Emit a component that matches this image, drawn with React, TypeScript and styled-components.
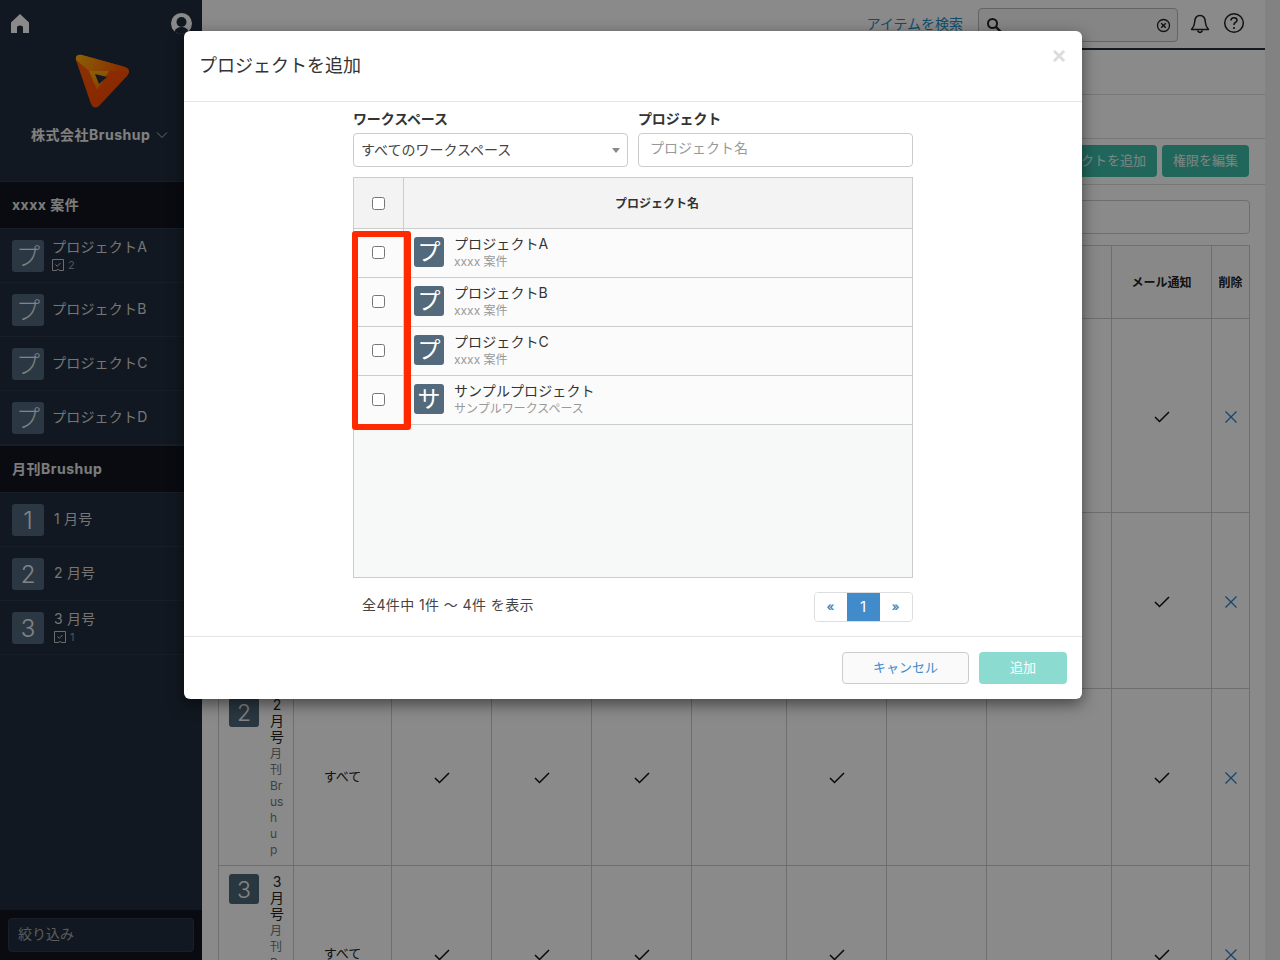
import React from "react";
import styled, { createGlobalStyle } from "styled-components";

const FONT = `Inter, "Noto Sans CJK JP", "Noto Sans", sans-serif`;

const Global = createGlobalStyle`
  html, body { margin: 0; padding: 0; height: 960px; overflow: hidden; background: #fff; }
  #root { height: 960px; }
  * { box-sizing: border-box; }
  body { font-family: ${FONT}; font-size: 13px; color: #333; }
`;

const Page = styled.div`
  display: flex;
  height: 960px;
  overflow: hidden;
  position: relative;
`;

/* ---------- sidebar ---------- */
const Sidebar = styled.aside`
  width: 202px;
  flex: none;
  height: 960px;
  background: #222e3d;
  display: flex;
  flex-direction: column;
  color: #fff;
`;
const SideTop = styled.div`
  height: 181px;
  flex: none;
  padding: 14px 10px 0 11px;
  display: flex;
  flex-direction: column;
`;
const SideIcons = styled.div`
  display: flex;
  justify-content: space-between;
  height: 24px;
`;
const UserSlot = styled.div`
  margin-top: -1px;
`;
const LogoWrap = styled.div`
  display: flex;
  padding-left: 64px;
  margin-top: 16px;
`;
const Company = styled.div`
  margin-top: 17px;
  padding-left: 20px;
  font-size: 14px;
  font-weight: 700;
  letter-spacing: 0.5px;
  line-height: 20px;
  color: #eee;
  display: flex;
  align-items: center;
  gap: 6px;
`;
const SectionHead = styled.div`
  height: 48px;
  flex: none;
  background: #11161e;
  border-top: 1px solid #2b3848;
  border-bottom: 1px solid #2b3848;
  padding: 0 12px 2px;
  display: flex;
  align-items: center;
  font-size: 14px;
  font-weight: 700;
  letter-spacing: 0.5px;
  color: #e6e6e6;
`;
const SideRow = styled.div`
  height: 54px;
  flex: none;
  border-bottom: 1px solid #2b3848;
  padding: 0 12px;
  display: flex;
  align-items: center;
  gap: 8px;
`;
const SideAvatar = styled.div`
  width: 32px;
  height: 32px;
  flex: none;
  border-radius: 3px;
  background: #50687e;
  color: #f2f2f2;
  font-size: 24px;
  font-weight: 300;
  line-height: 34px;
  text-align: center;
`;
const SideText = styled.div<{ $num: boolean }>`
  display: flex;
  flex-direction: column;
  font-size: 14px;
  line-height: 18px;
  color: #d9d9d9;
  letter-spacing: 0.2px;
  margin-top: -1px;
  padding-left: ${(p) => (p.$num ? 2 : 0)}px;
`;
const Badge = styled.span`
  display: flex;
  align-items: center;
  gap: 4px;
  margin-top: 1px;
  font-size: 11px;
  line-height: 16px;
  color: #999;
`;
const SideSpacer = styled.div`
  flex: 1;
`;
const SideFilterBar = styled.div`
  height: 50px;
  flex: none;
  background: #11161e;
  padding: 8px 8px 0;
`;
const SideFilter = styled.div`
  height: 34px;
  width: 186px;
  border: 1px solid #2f3c4c;
  border-radius: 4px;
  background: #222e3d;
  color: #a8a8a8;
  font-size: 14px;
  line-height: 30px;
  padding: 0 9px;
`;

/* ---------- main behind modal ---------- */
const Main = styled.main`
  width: 1063px;
  flex: none;
  height: 960px;
  background: #fff;
  display: flex;
  flex-direction: column;
`;
const ScrollTrack = styled.div`
  width: 15px;
  flex: none;
  height: 960px;
  background: #f0f0f0;
`;
const TopBar = styled.header`
  height: 50px;
  flex: none;
  border-bottom: 2px solid #26303c;
  display: flex;
  align-items: flex-start;
  justify-content: flex-end;
  padding: 8px 20px 0 0;
`;
const SearchLink = styled.span`
  font-size: 14px;
  line-height: 32px;
  color: #1a8fc9;
  margin-right: 15px;
`;
const SearchBox = styled.div`
  width: 200px;
  height: 34px;
  border: 1px solid #bbb;
  border-radius: 4px;
  background: #f6f6f6;
  display: flex;
  align-items: center;
  justify-content: space-between;
  padding: 0 6px 0 7px;
  margin-right: 12px;
`;
const TopIcons = styled.div`
  display: flex;
  gap: 13px;
  padding-top: 4px;
`;
const BellSlot = styled.div`
  margin-top: 2px;
`;
const SubBand = styled.div<{ $h: number }>`
  height: ${(p) => p.$h}px;
  flex: none;
  border-bottom: 1px solid #ddd;
`;
const ActionBand = styled.div`
  height: 46px;
  flex: none;
  border-bottom: 1px solid #ddd;
  display: flex;
  justify-content: flex-end;
  align-items: center;
  gap: 5px;
  padding: 0 16px 1px 0;
`;
const TealButton = styled.div`
  height: 32px;
  background: #3dbda9;
  color: #e8f7f4;
  border-radius: 4px;
  font-size: 13px;
  line-height: 30px;
  padding: 0 11px;
  white-space: nowrap;
`;
const Content = styled.div`
  padding: 15px 15px 0 16px;
`;
const Filter = styled.div`
  height: 34px;
  border: 1px solid #ccc;
  border-radius: 4px;
  background: #fff;
  margin-bottom: 11px;
`;
const MemberTable = styled.table`
  table-layout: fixed;
  width: 1031px;
  border-collapse: collapse;
  color: #222;
`;
const MemberTh = styled.th<{ $w: number }>`
  width: ${(p) => p.$w}px;
  height: 73px;
  border: 1px solid #ccc;
  background: #fbfbfb;
  font-size: 12px;
  font-weight: 700;
  padding: 0 0 2px;
`;
const MemberTr = styled.tr<{ $h: number }>`
  height: ${(p) => p.$h}px;
`;
const MemberTd = styled.td`
  border: 1px solid #ccc;
  text-align: center;
  padding: 2px 0 0;
  font-size: 13px;
  svg {
    display: block;
    margin: 0 auto;
  }
`;
const ScopeTd = styled(MemberTd)`
  padding: 0 0 4px;
`;
const DeleteTd = styled(MemberTd)`
  padding-left: 1px;
`;
const NameTd = styled.td`
  border: 1px solid #ccc;
  vertical-align: top;
  padding: 8px 10px 6px;
`;
const NameCell = styled.div`
  display: flex;
  gap: 11px;
`;
const MonthAvatar = styled.div`
  width: 30px;
  height: 30px;
  flex: none;
  border-radius: 3px;
  background: #4d6677;
  color: #f3f3f3;
  font-size: 23px;
  font-weight: 300;
  line-height: 33px;
  text-align: center;
`;
const NameText = styled.div`
  width: 16px;
  word-break: break-all;
  font-size: 14px;
  line-height: 16px;
  text-align: center;
`;
const NameMain = styled.div`
  margin-bottom: 1px;
`;
const NameSub = styled.div`
  font-size: 12px;
  line-height: 16px;
  color: #777;
  text-align: left;
`;

/* ---------- modal ---------- */
const Backdrop = styled.div`
  position: absolute;
  inset: 0;
  background: rgba(0, 0, 0, 0.46);
`;
const Modal = styled.div`
  position: absolute;
  left: 184px;
  top: 31px;
  width: 898px;
  height: 668px;
  background: #fff;
  border-radius: 6px;
  box-shadow: 0 5px 15px rgba(0, 0, 0, 0.5);
  display: flex;
  flex-direction: column;
`;
const ModalHead = styled.div`
  height: 71px;
  flex: none;
  border-bottom: 1px solid #e5e5e5;
  padding: 0 15px;
  display: flex;
  align-items: center;
  justify-content: space-between;
`;
const ModalTitle = styled.h4`
  margin: 0 0 4px;
  font-size: 18px;
  font-weight: 400;
  color: #333;
`;
const CloseX = styled.span`
  font-family: "Liberation Sans", sans-serif;
  font-size: 24px;
  font-weight: 700;
  line-height: 1;
  color: #dcdcdc;
  position: relative;
  top: -10px;
  right: 1px;
`;
const ModalBody = styled.div`
  flex: 1;
  width: 560px;
  margin: 0 auto;
  padding-top: 7px;
`;
const FormRow = styled.div`
  display: flex;
  gap: 10px;
`;
const Field = styled.div`
  width: 275px;
`;
const FieldLabel = styled.label`
  display: block;
  font-size: 14px;
  font-weight: 700;
  letter-spacing: -0.15px;
  line-height: 20px;
  height: 24px;
  color: #333;
`;
const SelectBox = styled.div`
  height: 34px;
  border: 1px solid #ccc;
  border-radius: 4px;
  font-size: 14px;
  line-height: 32px;
  color: #444;
  padding: 0 7px;
  display: flex;
  align-items: center;
  justify-content: space-between;
`;
const Caret = styled.span`
  width: 0;
  height: 0;
  border-left: 4px solid transparent;
  border-right: 4px solid transparent;
  border-top: 5px solid #888;
`;
const TextBox = styled.div`
  height: 34px;
  border: 1px solid #ccc;
  border-radius: 4px;
  font-size: 14px;
  line-height: 28px;
  color: #999;
  padding: 0 11px;
`;
const TableArea = styled.div`
  margin-top: 10px;
  height: 401px;
  border: 1px solid #ccc;
  background: #f7f8f8;
  position: relative;
`;
const HeadRow = styled.div`
  display: flex;
  height: 51px;
  background: #f3f3f3;
  border-bottom: 1px solid #ccc;
`;
const ProjectRow = styled.div`
  display: flex;
  height: 49px;
  background: #fbfbfb;
  border-bottom: 1px solid #ccc;
`;
const CheckCol = styled.div<{ $lift?: boolean }>`
  width: 50px;
  flex: none;
  border-right: 1px solid #ccc;
  display: flex;
  align-items: center;
  justify-content: center;
  padding-bottom: ${(p) => (p.$lift ? 2 : 0)}px;
`;
const HeadName = styled.div`
  flex: 1;
  display: flex;
  align-items: center;
  justify-content: center;
  font-size: 12px;
  font-weight: 700;
  color: #333;
  padding: 0 2px 1px 0;
`;
const Check = styled.input.attrs({ type: "checkbox" })`
  appearance: none;
  width: 13px;
  height: 13px;
  margin: 0;
  background: #fff;
  border: 1px solid #767676;
  border-radius: 2.5px;
`;
const ProjectCell = styled.div`
  flex: 1;
  display: flex;
  align-items: center;
  padding: 0 0 2px 10px;
  gap: 10px;
`;
const ProjectAvatar = styled.div`
  width: 30px;
  height: 30px;
  flex: none;
  border-radius: 3px;
  background: #526a7b;
  color: #fff;
  font-size: 23px;
  line-height: 31px;
  text-align: center;
`;
const ProjectText = styled.div`
  display: flex;
  flex-direction: column;
`;
const ProjectName = styled.span`
  font-size: 14px;
  line-height: 16px;
  color: #333;
  letter-spacing: 0.1px;
`;
const ProjectSub = styled.span`
  font-size: 12px;
  line-height: 15px;
  margin-top: 2px;
  color: #999;
`;
const RedFrame = styled.div`
  position: absolute;
  left: -2px;
  top: 53px;
  width: 59px;
  height: 199px;
  border: 6px solid #ff2a00;
  border-right-width: 7px;
  border-radius: 3px;
`;
const PagerRow = styled.div`
  display: flex;
  justify-content: space-between;
  align-items: center;
  padding: 14px 0 0 9px;
`;
const PagerText = styled.span`
  font-size: 14px;
  letter-spacing: 0.4px;
  color: #444;
  margin-top: -6px;
`;
const Pager = styled.div`
  display: flex;
  height: 30px;
  width: 99px;
  border: 1px solid #ddd;
  border-radius: 4px;
  overflow: hidden;
`;
const PageBtn = styled.div<{ $active?: boolean; $w: number }>`
  width: ${(p) => p.$w}px;
  background: ${(p) => (p.$active ? "#428bca" : "#fff")};
  color: ${(p) => (p.$active ? "#fff" : "#428bca")};
  font-size: ${(p) => (p.$active ? 15 : 12)}px;
  font-weight: ${(p) => (p.$active ? 400 : 700)};
  text-align: center;
  line-height: 27px;
  padding-right: 1px;
`;
const ModalFoot = styled.div`
  height: 63px;
  flex: none;
  border-top: 1px solid #e5e5e5;
  padding: 15px 15px 0 0;
  display: flex;
  justify-content: flex-end;
  gap: 10px;
`;
const CancelBtn = styled.div`
  width: 127px;
  height: 32px;
  border: 1px solid #ccc;
  border-radius: 4px;
  background: #fafafa;
  color: #428bca;
  font-size: 13px;
  line-height: 28px;
  text-align: center;
`;
const AddBtn = styled.div`
  width: 88px;
  height: 32px;
  border-radius: 4px;
  background: #8cdbd0;
  color: #fff;
  font-size: 13px;
  line-height: 30px;
  text-align: center;
`;

/* ---------- icons ---------- */
const HomeIcon = () => (
  <svg width="18" height="19" viewBox="0 0 18 19">
    <path d="M9 0 18 8.500V19H12V13.500Q12 11.500 9 11.500 6 11.500 6 13.500V19H0V8.500Z" fill="#fff" />
  </svg>
);
const UserIcon = () => (
  <svg width="21" height="21" viewBox="0 0 21 21">
    <circle cx="10.500" cy="10.500" r="10.500" fill="#fff" />
    <circle cx="10.500" cy="9" r="5" fill="#222e3d" />
    <path d="M3.500 18.500Q5 14 10.500 14 16 14 17.500 18.500 14 21 10.500 21 7 21 3.500 18.500Z" fill="#222e3d" />
  </svg>
);
const Logo = () => (
  <svg width="54" height="54" viewBox="0 0 54 54">
    <defs>
      <linearGradient id="lg1" x1="0" y1="0" x2="1" y2="0.200">
        <stop offset="0" stopColor="#ffb50a" />
        <stop offset="1" stopColor="#ff5500" />
      </linearGradient>
      <linearGradient id="lg2" x1="0" y1="0" x2="0.500" y2="1">
        <stop offset="0" stopColor="#ff5c0a" />
        <stop offset="1" stopColor="#ff4a00" />
      </linearGradient>
      <linearGradient id="lg3" x1="0" y1="0" x2="0.300" y2="1">
        <stop offset="0" stopColor="#ffb50a" />
        <stop offset="1" stopColor="#ff7a05" />
      </linearGradient>
    </defs>
    <path d="M1 6Q0 0 7 1L50 13Q57 16 52 22L24 52Q19 56 16 50Z" fill="url(#lg2)" />
    <path d="M1 6Q0 0 7 1L50 13Q55 15 53 18L34 17 14 17Z" fill="url(#lg1)" />
    <path d="M14 17 34 17 22 36Z" fill="url(#lg3)" />
    <path d="M20 20 32 23 24 30Z" fill="#222e3d" />
  </svg>
);
const TaskIcon = () => (
  <svg width="12" height="12" viewBox="0 0 12 12" fill="none">
    <path d="M.5.5h11v11H8l-2-1-2 1H.5Z" stroke="#c8c8c8" />
    <path d="M3.500 5.500 5.300 7.300 8.500 4" stroke="#c8c8c8" />
  </svg>
);
const Chevron = () => (
  <svg width="12" height="8" viewBox="0 0 12 8" fill="none">
    <path d="M1 1.500 6 6.500 11 1.500" stroke="#c0c0c0" />
  </svg>
);
const SearchIcon = () => (
  <svg width="16" height="16" viewBox="0 0 16 16" fill="none">
    <circle cx="6.500" cy="6.500" r="4.500" stroke="#222" strokeWidth="2" />
    <path d="M10 10 14.500 14.500" stroke="#222" strokeWidth="2.400" />
  </svg>
);
const ClearIcon = () => (
  <svg width="15" height="15" viewBox="0 0 15 15" fill="none">
    <circle cx="7.500" cy="7.500" r="6" stroke="#222" strokeWidth="1.300" />
    <path d="M5.200 5.200 9.800 9.800M9.800 5.200 5.200 9.800" stroke="#222" strokeWidth="1.500" />
  </svg>
);
const BellIcon = () => (
  <svg width="20" height="20" viewBox="0 0 20 20" fill="none">
    <path d="M10 1.500Q15 1.500 15.300 8 15.500 12 18.500 15.500H1.500Q4.500 12 4.700 8 5 1.500 10 1.500Z" stroke="#222" strokeWidth="1.500" strokeLinejoin="round" />
    <path d="M7.500 16.500Q10 20.500 12.500 16.500" stroke="#222" strokeWidth="1.500" />
  </svg>
);
const HelpIcon = () => (
  <svg width="22" height="22" viewBox="0 0 22 22" fill="none">
    <circle cx="11" cy="11" r="9.300" stroke="#222" strokeWidth="1.500" />
    <path d="M8 8.500Q8 5.700 11 5.700 14 5.700 14 8.300 14 9.800 12 10.800 11 11.400 11 13" stroke="#222" strokeWidth="1.600" />
    <circle cx="11" cy="16" r="1.100" fill="#222" />
  </svg>
);
const Tick = () => (
  <svg width="16" height="12" viewBox="0 0 16 12" fill="none">
    <path d="M1 6 5.500 10.500 15 1" stroke="#111" strokeWidth="1.500" />
  </svg>
);
const Cross = () => (
  <svg width="12" height="12" viewBox="0 0 12 12" fill="none">
    <path d="M.5.5 11.500 11.500M11.500.5.500 11.500" stroke="#2c7fc4" strokeWidth="1.300" />
  </svg>
);

/* ---------- data ---------- */
const colWidths = [75, 98, 100, 100, 100, 95, 100, 100, 125, 100, 38];
const heads = ["", "", "", "", "", "", "", "", "", "メール通知", "削除"];
const memberRows = [
  { h: 194, num: "1", name: "", sub: "" },
  { h: 176, num: "1", name: "", sub: "" },
  { h: 177, num: "2", name: "2月号", sub: "月刊Brushup" },
  { h: 177, num: "3", name: "3月号", sub: "月刊Brushup" },
];
const sideGroups = [
  {
    title: "xxxx 案件",
    num: false,
    rows: [
      { a: "プ", t: "プロジェクトA", n: "2" },
      { a: "プ", t: "プロジェクトB" },
      { a: "プ", t: "プロジェクトC" },
      { a: "プ", t: "プロジェクトD" },
    ],
  },
  {
    title: "月刊Brushup",
    num: true,
    rows: [
      { a: "1", t: "1 月号" },
      { a: "2", t: "2 月号" },
      { a: "3", t: "3 月号", n: "1" },
    ],
  },
];
const projects = [
  { a: "プ", t: "プロジェクトA", s: "xxxx 案件" },
  { a: "プ", t: "プロジェクトB", s: "xxxx 案件" },
  { a: "プ", t: "プロジェクトC", s: "xxxx 案件" },
  { a: "サ", t: "サンプルプロジェクト", s: "サンプルワークスペース" },
];

export default function App() {
  return (
    <Page>
      <Global />
      <Sidebar>
        <SideTop>
          <SideIcons>
            <HomeIcon />
            <UserSlot>
              <UserIcon />
            </UserSlot>
          </SideIcons>
          <LogoWrap>
            <Logo />
          </LogoWrap>
          <Company>
            株式会社Brushup
            <Chevron />
          </Company>
        </SideTop>
        {sideGroups.map((g) => (
          <React.Fragment key={g.title}>
            <SectionHead>{g.title}</SectionHead>
            {g.rows.map((r) => (
              <SideRow key={r.t}>
                <SideAvatar>{r.a}</SideAvatar>
                <SideText $num={g.num}>
                  {r.t}
                  {r.n && (
                    <Badge>
                      <TaskIcon />
                      {r.n}
                    </Badge>
                  )}
                </SideText>
              </SideRow>
            ))}
          </React.Fragment>
        ))}
        <SideSpacer />
        <SideFilterBar>
          <SideFilter>絞り込み</SideFilter>
        </SideFilterBar>
      </Sidebar>
      <Main>
        <TopBar>
          <SearchLink>アイテムを検索</SearchLink>
          <SearchBox>
            <SearchIcon />
            <ClearIcon />
          </SearchBox>
          <TopIcons>
            <BellSlot>
              <BellIcon />
            </BellSlot>
            <HelpIcon />
          </TopIcons>
        </TopBar>
        <SubBand $h={45} />
        <SubBand $h={44} />
        <ActionBand>
          <TealButton>プロジェクトを追加</TealButton>
          <TealButton>権限を編集</TealButton>
        </ActionBand>
        <Content>
          <Filter />
          <MemberTable>
            <thead>
              <tr>
                {colWidths.map((w, i) => (
                  <MemberTh key={i} $w={w}>
                    {heads[i]}
                  </MemberTh>
                ))}
              </tr>
            </thead>
            <tbody>
              {memberRows.map((r, ri) => (
                <MemberTr key={ri} $h={r.h}>
                  <NameTd>
                    <NameCell>
                      <MonthAvatar>{r.num}</MonthAvatar>
                      <NameText>
                        <NameMain>{r.name}</NameMain>
                        <NameSub>{r.sub}</NameSub>
                      </NameText>
                    </NameCell>
                  </NameTd>
                  <ScopeTd>すべて</ScopeTd>
                  <MemberTd><Tick /></MemberTd>
                  <MemberTd><Tick /></MemberTd>
                  <MemberTd><Tick /></MemberTd>
                  <MemberTd />
                  <MemberTd><Tick /></MemberTd>
                  <MemberTd />
                  <MemberTd />
                  <MemberTd><Tick /></MemberTd>
                  <DeleteTd><Cross /></DeleteTd>
                </MemberTr>
              ))}
            </tbody>
          </MemberTable>
        </Content>
      </Main>
      <ScrollTrack />
      <Backdrop />
      <Modal>
        <ModalHead>
          <ModalTitle>プロジェクトを追加</ModalTitle>
          <CloseX>×</CloseX>
        </ModalHead>
        <ModalBody>
          <FormRow>
            <Field>
              <FieldLabel>ワークスペース</FieldLabel>
              <SelectBox>
                すべてのワークスペース
                <Caret />
              </SelectBox>
            </Field>
            <Field>
              <FieldLabel>プロジェクト</FieldLabel>
              <TextBox>プロジェクト名</TextBox>
            </Field>
          </FormRow>
          <TableArea>
            <HeadRow>
              <CheckCol>
                <Check />
              </CheckCol>
              <HeadName>プロジェクト名</HeadName>
            </HeadRow>
            {projects.map((p) => (
              <ProjectRow key={p.t}>
                <CheckCol $lift>
                  <Check />
                </CheckCol>
                <ProjectCell>
                  <ProjectAvatar>{p.a}</ProjectAvatar>
                  <ProjectText>
                    <ProjectName>{p.t}</ProjectName>
                    <ProjectSub>{p.s}</ProjectSub>
                  </ProjectText>
                </ProjectCell>
              </ProjectRow>
            ))}
            <RedFrame />
          </TableArea>
          <PagerRow>
            <PagerText>全4件中 1件 〜 4件 を表示</PagerText>
            <Pager>
              <PageBtn $w={32}>«</PageBtn>
              <PageBtn $w={33} $active>1</PageBtn>
              <PageBtn $w={32}>»</PageBtn>
            </Pager>
          </PagerRow>
        </ModalBody>
        <ModalFoot>
          <CancelBtn>キャンセル</CancelBtn>
          <AddBtn>追加</AddBtn>
        </ModalFoot>
      </Modal>
    </Page>
  );
}
